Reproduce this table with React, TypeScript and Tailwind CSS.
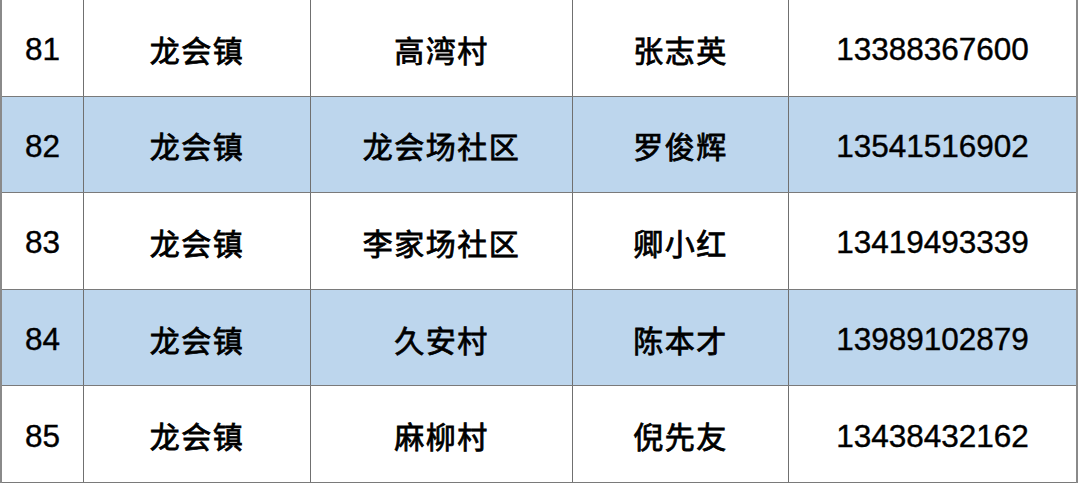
const rows = [
  { no: '81', town: '龙会镇', village: '高湾村', name: '张志英', phone: '13388367600', blue: false },
  { no: '82', town: '龙会镇', village: '龙会场社区', name: '罗俊辉', phone: '13541516902', blue: true },
  { no: '83', town: '龙会镇', village: '李家场社区', name: '卿小红', phone: '13419493339', blue: false },
  { no: '84', town: '龙会镇', village: '久安村', name: '陈本才', phone: '13989102879', blue: true },
  { no: '85', town: '龙会镇', village: '麻柳村', name: '倪先友', phone: '13438432162', blue: false },
];

const cjk = "font-['Noto_Sans_CJK_SC',sans-serif] font-normal text-[30px] tracking-[1.5px] pt-[3px] [-webkit-text-stroke:0.8px_black]";
const num = "font-['Liberation_Sans',Arial,sans-serif] text-[31.5px] pt-[4px] [-webkit-text-stroke:0.4px_black]";

export default function App() {
  return (
    <div className="w-[1080px] h-[483px] bg-white overflow-hidden">
      <div className="w-[1078px] border-l-2 border-r-2 border-[#8a8a8a] text-black">
        {rows.map((r) => (
          <div
            key={r.no}
            className={`grid grid-cols-[82px_227px_262px_216px_1fr] h-[96.6px] border-b-[1.5px] border-[#7a7a7a] ${
              r.blue ? 'bg-[#bdd6ed]' : 'bg-white'
            }`}
          >
            <div className={`flex items-center justify-center border-r border-[#707070] ${num}`}>{r.no}</div>
            <div className={`flex items-center justify-center border-r border-[#707070] ${cjk}`}>{r.town}</div>
            <div className={`flex items-center justify-center border-r border-[#707070] ${cjk}`}>{r.village}</div>
            <div className={`flex items-center justify-center border-r border-[#707070] ${cjk}`}>{r.name}</div>
            <div className={`flex items-center justify-center ${num}`}>{r.phone}</div>
          </div>
        ))}
      </div>
    </div>
  );
}
